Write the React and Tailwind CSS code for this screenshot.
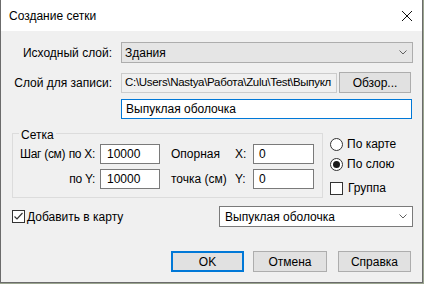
import React from 'react';

function Chevron() {
  return (
    <svg width="8" height="5" viewBox="0 0 8 5">
      <path d="M0.5 0.5 L4 4 L7.5 0.5" fill="none" stroke="#606060" strokeWidth="1" />
    </svg>
  );
}

function Radio({ checked, label }) {
  return (
    <div className="flex items-center h-[20px]">
      <span className="w-[13px] h-[13px] rounded-full border border-[#333] bg-white flex items-center justify-center">
        {checked && <span className="w-[7px] h-[7px] rounded-full bg-[#1a1a1a]" />}
      </span>
      <span className="ml-[4px]">{label}</span>
    </div>
  );
}

function Check({ checked }) {
  return (
    <span className="w-[13px] h-[13px] border border-[#333] bg-white flex items-center justify-center">
      {checked && (
        <svg width="11" height="11" viewBox="0 0 11 11">
          <path d="M1.5 5.5 L4 8 L9.5 2" fill="none" stroke="#333" strokeWidth="1.2" />
        </svg>
      )}
    </span>
  );
}

function Btn({ children, w, focus }) {
  return (
    <button
      className={
        'h-[21px] flex items-center justify-center bg-[#e1e1e1] font-normal ' +
        w +
        (focus ? ' border-2 border-[#0078d7]' : ' border border-[#adadad]')
      }
    >
      {children}
    </button>
  );
}

export default function App() {
  return (
    <div className="w-[424px] h-[284px] bg-[#9aa58f] font-['Liberation_Sans',Arial,sans-serif] text-[12px] text-black leading-none whitespace-nowrap">
      <div className="w-[423px] h-[283px] border-x border-b border-[#6b6b6b] bg-[#f0f0f0] flex flex-col">
        {/* title bar */}
        <div className="h-[31px] bg-white flex items-center justify-between pl-[8px] pr-[8px]">
          <span>Создание сетки</span>
          <svg width="12" height="12" viewBox="0 0 12 12" className="mr-[1px]">
            <path d="M1 1 L11 11 M11 1 L1 11" stroke="#111" strokeWidth="1" />
          </svg>
        </div>

        {/* source layer */}
        <div className="flex items-center mt-[11px]">
          <span className="w-[111px] text-right">Исходный слой:</span>
          <div className="ml-[9px] w-[292px] h-[21px] bg-[#e5e5e5] border border-[#adadad] flex items-center justify-between pl-[3px] pr-[5px]">
            <span>Здания</span>
            <Chevron />
          </div>
        </div>

        {/* output layer */}
        <div className="flex items-center mt-[9px]">
          <span className="w-[111px] text-right">Слой для записи:</span>
          <div className="ml-[9px] w-[216px] shrink-0 h-[20px] bg-[#f0f0f0] border border-[#cccccc] flex items-center pl-[3px] overflow-hidden">
            <span className="text-[11.5px] tracking-[-0.3px]">
              {'C:\\Users\\Nastya\\Работа\\Zulu\\Test\\Выпукл'}
            </span>
          </div>
          <Btn w="ml-[2px] w-[72px] h-[20px]">Обзор...</Btn>
        </div>
        <div className="flex mt-[6px]">
          <div className="ml-[120px] w-[291px] h-[20px] bg-white border border-[#0078d7] flex items-center pl-[4px]">
            Выпуклая оболочка
          </div>
        </div>

        {/* grid group */}
        <div className="flex items-start mt-[14px]">
          <div className="relative ml-[11px] w-[311px] h-[65px] border border-[#dcdcdc] pt-[10px]">
            <span className="absolute left-[6px] top-[-5px] px-[2px] bg-[#f0f0f0]">Сетка</span>
            <div className="flex items-center h-[20px]">
              <div className="w-[82px] flex justify-between pl-[7px] tracking-[-0.3px]">
                <span>Шаг (см)</span>
                <span>по X:</span>
              </div>
              <div className="ml-[5px] w-[60px] h-[20px] bg-white border border-[#7a7a7a] flex items-center pl-[6px]">10000</div>
              <span className="ml-[11px] w-[64px]">Опорная</span>
              <span className="w-[18px]">X:</span>
              <div className="w-[61px] h-[20px] bg-white border border-[#7a7a7a] flex items-center pl-[5px]">0</div>
            </div>
            <div className="flex items-center h-[20px] mt-[5px]">
              <div className="w-[82px] flex justify-end tracking-[-0.3px]">
                <span>по Y:</span>
              </div>
              <div className="ml-[5px] w-[60px] h-[20px] bg-white border border-[#7a7a7a] flex items-center pl-[6px]">10000</div>
              <span className="ml-[11px] w-[64px]">точка (см)</span>
              <span className="w-[18px]">Y:</span>
              <div className="w-[61px] h-[20px] bg-white border border-[#7a7a7a] flex items-center pl-[5px]">0</div>
            </div>
          </div>
          <div className="ml-[7px] flex flex-col">
            <div className="mt-[1px]">
              <Radio label="По карте" />
            </div>
            <Radio checked label="По слою" />
            <div className="flex items-center h-[20px] mt-[4px]">
              <Check />
              <span className="ml-[5px]">Группа</span>
            </div>
          </div>
        </div>

        {/* add to map */}
        <div className="flex items-center h-[21px] mt-[8px]">
          <div className="ml-[11px] flex items-center">
            <Check checked />
            <span className="ml-[2px]">Добавить в карту</span>
          </div>
          <div className="ml-auto mr-[9px] w-[194px] h-[21px] bg-white border border-[#7a7a7a] flex items-center justify-between pl-[5px] pr-[5px]">
            <span>Выпуклая оболочка</span>
            <Chevron />
          </div>
        </div>

        {/* buttons */}
        <div className="flex justify-end mt-[24px] mr-[11px]">
          <Btn w="w-[73px]" focus>OK</Btn>
          <Btn w="ml-[9px] w-[74px]">Отмена</Btn>
          <Btn w="ml-[11px] w-[73px]">Справка</Btn>
        </div>
      </div>
    </div>
  );
}
